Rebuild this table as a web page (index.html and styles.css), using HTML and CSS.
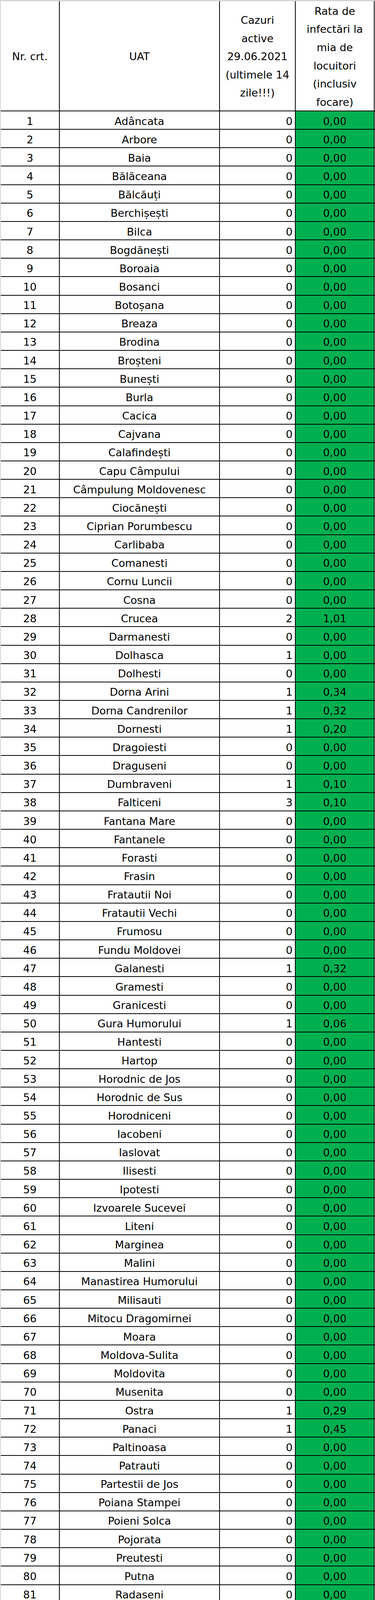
FILE: index.html
```html
<!DOCTYPE html>
<html lang="ro">
<head>
<meta charset="utf-8">
<title>Cazuri active 29.06.2021</title>
<link rel="stylesheet" href="styles.css">
</head>
<body>
<div class="sheet">
  <div class="row head">
    <div class="c c1">Nr. crt.</div>
    <div class="c c2">UAT</div>
    <div class="c c3">Cazuri<br>active<br>29.06.2021<br>(ultimele 14<br>zile!!!)</div>
    <div class="c c4">Rata de<br>infectări la<br>mia de<br>locuitori<br>(inclusiv<br>focare)</div>
  </div>
  <div class="row"><div class="c c1">1</div><div class="c c2">Adâncata</div><div class="c c3">0</div><div class="c c4">0,00</div></div>
  <div class="row"><div class="c c1">2</div><div class="c c2">Arbore</div><div class="c c3">0</div><div class="c c4">0,00</div></div>
  <div class="row"><div class="c c1">3</div><div class="c c2">Baia</div><div class="c c3">0</div><div class="c c4">0,00</div></div>
  <div class="row"><div class="c c1">4</div><div class="c c2">Bălăceana</div><div class="c c3">0</div><div class="c c4">0,00</div></div>
  <div class="row"><div class="c c1">5</div><div class="c c2">Bălcăuți</div><div class="c c3">0</div><div class="c c4">0,00</div></div>
  <div class="row"><div class="c c1">6</div><div class="c c2">Berchișești</div><div class="c c3">0</div><div class="c c4">0,00</div></div>
  <div class="row"><div class="c c1">7</div><div class="c c2">Bilca</div><div class="c c3">0</div><div class="c c4">0,00</div></div>
  <div class="row"><div class="c c1">8</div><div class="c c2">Bogdănești</div><div class="c c3">0</div><div class="c c4">0,00</div></div>
  <div class="row"><div class="c c1">9</div><div class="c c2">Boroaia</div><div class="c c3">0</div><div class="c c4">0,00</div></div>
  <div class="row"><div class="c c1">10</div><div class="c c2">Bosanci</div><div class="c c3">0</div><div class="c c4">0,00</div></div>
  <div class="row"><div class="c c1">11</div><div class="c c2">Botoșana</div><div class="c c3">0</div><div class="c c4">0,00</div></div>
  <div class="row"><div class="c c1">12</div><div class="c c2">Breaza</div><div class="c c3">0</div><div class="c c4">0,00</div></div>
  <div class="row"><div class="c c1">13</div><div class="c c2">Brodina</div><div class="c c3">0</div><div class="c c4">0,00</div></div>
  <div class="row"><div class="c c1">14</div><div class="c c2">Broșteni</div><div class="c c3">0</div><div class="c c4">0,00</div></div>
  <div class="row"><div class="c c1">15</div><div class="c c2">Bunești</div><div class="c c3">0</div><div class="c c4">0,00</div></div>
  <div class="row"><div class="c c1">16</div><div class="c c2">Burla</div><div class="c c3">0</div><div class="c c4">0,00</div></div>
  <div class="row"><div class="c c1">17</div><div class="c c2">Cacica</div><div class="c c3">0</div><div class="c c4">0,00</div></div>
  <div class="row"><div class="c c1">18</div><div class="c c2">Cajvana</div><div class="c c3">0</div><div class="c c4">0,00</div></div>
  <div class="row"><div class="c c1">19</div><div class="c c2">Calafindești</div><div class="c c3">0</div><div class="c c4">0,00</div></div>
  <div class="row"><div class="c c1">20</div><div class="c c2">Capu Câmpului</div><div class="c c3">0</div><div class="c c4">0,00</div></div>
  <div class="row"><div class="c c1">21</div><div class="c c2">Câmpulung Moldovenesc</div><div class="c c3">0</div><div class="c c4">0,00</div></div>
  <div class="row"><div class="c c1">22</div><div class="c c2">Ciocănești</div><div class="c c3">0</div><div class="c c4">0,00</div></div>
  <div class="row"><div class="c c1">23</div><div class="c c2">Ciprian Porumbescu</div><div class="c c3">0</div><div class="c c4">0,00</div></div>
  <div class="row"><div class="c c1">24</div><div class="c c2">Carlibaba</div><div class="c c3">0</div><div class="c c4">0,00</div></div>
  <div class="row"><div class="c c1">25</div><div class="c c2">Comanesti</div><div class="c c3">0</div><div class="c c4">0,00</div></div>
  <div class="row"><div class="c c1">26</div><div class="c c2">Cornu Luncii</div><div class="c c3">0</div><div class="c c4">0,00</div></div>
  <div class="row"><div class="c c1">27</div><div class="c c2">Cosna</div><div class="c c3">0</div><div class="c c4">0,00</div></div>
  <div class="row"><div class="c c1">28</div><div class="c c2">Crucea</div><div class="c c3">2</div><div class="c c4">1,01</div></div>
  <div class="row"><div class="c c1">29</div><div class="c c2">Darmanesti</div><div class="c c3">0</div><div class="c c4">0,00</div></div>
  <div class="row"><div class="c c1">30</div><div class="c c2">Dolhasca</div><div class="c c3">1</div><div class="c c4">0,00</div></div>
  <div class="row"><div class="c c1">31</div><div class="c c2">Dolhesti</div><div class="c c3">0</div><div class="c c4">0,00</div></div>
  <div class="row"><div class="c c1">32</div><div class="c c2">Dorna Arini</div><div class="c c3">1</div><div class="c c4">0,34</div></div>
  <div class="row"><div class="c c1">33</div><div class="c c2">Dorna Candrenilor</div><div class="c c3">1</div><div class="c c4">0,32</div></div>
  <div class="row"><div class="c c1">34</div><div class="c c2">Dornesti</div><div class="c c3">1</div><div class="c c4">0,20</div></div>
  <div class="row"><div class="c c1">35</div><div class="c c2">Dragoiesti</div><div class="c c3">0</div><div class="c c4">0,00</div></div>
  <div class="row"><div class="c c1">36</div><div class="c c2">Draguseni</div><div class="c c3">0</div><div class="c c4">0,00</div></div>
  <div class="row"><div class="c c1">37</div><div class="c c2">Dumbraveni</div><div class="c c3">1</div><div class="c c4">0,10</div></div>
  <div class="row"><div class="c c1">38</div><div class="c c2">Falticeni</div><div class="c c3">3</div><div class="c c4">0,10</div></div>
  <div class="row"><div class="c c1">39</div><div class="c c2">Fantana Mare</div><div class="c c3">0</div><div class="c c4">0,00</div></div>
  <div class="row"><div class="c c1">40</div><div class="c c2">Fantanele</div><div class="c c3">0</div><div class="c c4">0,00</div></div>
  <div class="row"><div class="c c1">41</div><div class="c c2">Forasti</div><div class="c c3">0</div><div class="c c4">0,00</div></div>
  <div class="row"><div class="c c1">42</div><div class="c c2">Frasin</div><div class="c c3">0</div><div class="c c4">0,00</div></div>
  <div class="row"><div class="c c1">43</div><div class="c c2">Fratautii Noi</div><div class="c c3">0</div><div class="c c4">0,00</div></div>
  <div class="row"><div class="c c1">44</div><div class="c c2">Fratautii Vechi</div><div class="c c3">0</div><div class="c c4">0,00</div></div>
  <div class="row"><div class="c c1">45</div><div class="c c2">Frumosu</div><div class="c c3">0</div><div class="c c4">0,00</div></div>
  <div class="row"><div class="c c1">46</div><div class="c c2">Fundu Moldovei</div><div class="c c3">0</div><div class="c c4">0,00</div></div>
  <div class="row"><div class="c c1">47</div><div class="c c2">Galanesti</div><div class="c c3">1</div><div class="c c4">0,32</div></div>
  <div class="row"><div class="c c1">48</div><div class="c c2">Gramesti</div><div class="c c3">0</div><div class="c c4">0,00</div></div>
  <div class="row"><div class="c c1">49</div><div class="c c2">Granicesti</div><div class="c c3">0</div><div class="c c4">0,00</div></div>
  <div class="row"><div class="c c1">50</div><div class="c c2">Gura Humorului</div><div class="c c3">1</div><div class="c c4">0,06</div></div>
  <div class="row"><div class="c c1">51</div><div class="c c2">Hantesti</div><div class="c c3">0</div><div class="c c4">0,00</div></div>
  <div class="row"><div class="c c1">52</div><div class="c c2">Hartop</div><div class="c c3">0</div><div class="c c4">0,00</div></div>
  <div class="row"><div class="c c1">53</div><div class="c c2">Horodnic de Jos</div><div class="c c3">0</div><div class="c c4">0,00</div></div>
  <div class="row"><div class="c c1">54</div><div class="c c2">Horodnic de Sus</div><div class="c c3">0</div><div class="c c4">0,00</div></div>
  <div class="row"><div class="c c1">55</div><div class="c c2">Horodniceni</div><div class="c c3">0</div><div class="c c4">0,00</div></div>
  <div class="row"><div class="c c1">56</div><div class="c c2">Iacobeni</div><div class="c c3">0</div><div class="c c4">0,00</div></div>
  <div class="row"><div class="c c1">57</div><div class="c c2">Iaslovat</div><div class="c c3">0</div><div class="c c4">0,00</div></div>
  <div class="row"><div class="c c1">58</div><div class="c c2">Ilisesti</div><div class="c c3">0</div><div class="c c4">0,00</div></div>
  <div class="row"><div class="c c1">59</div><div class="c c2">Ipotesti</div><div class="c c3">0</div><div class="c c4">0,00</div></div>
  <div class="row"><div class="c c1">60</div><div class="c c2">Izvoarele Sucevei</div><div class="c c3">0</div><div class="c c4">0,00</div></div>
  <div class="row"><div class="c c1">61</div><div class="c c2">Liteni</div><div class="c c3">0</div><div class="c c4">0,00</div></div>
  <div class="row"><div class="c c1">62</div><div class="c c2">Marginea</div><div class="c c3">0</div><div class="c c4">0,00</div></div>
  <div class="row"><div class="c c1">63</div><div class="c c2">Malini</div><div class="c c3">0</div><div class="c c4">0,00</div></div>
  <div class="row"><div class="c c1">64</div><div class="c c2">Manastirea Humorului</div><div class="c c3">0</div><div class="c c4">0,00</div></div>
  <div class="row"><div class="c c1">65</div><div class="c c2">Milisauti</div><div class="c c3">0</div><div class="c c4">0,00</div></div>
  <div class="row"><div class="c c1">66</div><div class="c c2">Mitocu Dragomirnei</div><div class="c c3">0</div><div class="c c4">0,00</div></div>
  <div class="row"><div class="c c1">67</div><div class="c c2">Moara</div><div class="c c3">0</div><div class="c c4">0,00</div></div>
  <div class="row"><div class="c c1">68</div><div class="c c2">Moldova-Sulita</div><div class="c c3">0</div><div class="c c4">0,00</div></div>
  <div class="row"><div class="c c1">69</div><div class="c c2">Moldovita</div><div class="c c3">0</div><div class="c c4">0,00</div></div>
  <div class="row"><div class="c c1">70</div><div class="c c2">Musenita</div><div class="c c3">0</div><div class="c c4">0,00</div></div>
  <div class="row"><div class="c c1">71</div><div class="c c2">Ostra</div><div class="c c3">1</div><div class="c c4">0,29</div></div>
  <div class="row"><div class="c c1">72</div><div class="c c2">Panaci</div><div class="c c3">1</div><div class="c c4">0,45</div></div>
  <div class="row"><div class="c c1">73</div><div class="c c2">Paltinoasa</div><div class="c c3">0</div><div class="c c4">0,00</div></div>
  <div class="row"><div class="c c1">74</div><div class="c c2">Patrauti</div><div class="c c3">0</div><div class="c c4">0,00</div></div>
  <div class="row"><div class="c c1">75</div><div class="c c2">Partestii de Jos</div><div class="c c3">0</div><div class="c c4">0,00</div></div>
  <div class="row"><div class="c c1">76</div><div class="c c2">Poiana Stampei</div><div class="c c3">0</div><div class="c c4">0,00</div></div>
  <div class="row"><div class="c c1">77</div><div class="c c2">Poieni Solca</div><div class="c c3">0</div><div class="c c4">0,00</div></div>
  <div class="row"><div class="c c1">78</div><div class="c c2">Pojorata</div><div class="c c3">0</div><div class="c c4">0,00</div></div>
  <div class="row"><div class="c c1">79</div><div class="c c2">Preutesti</div><div class="c c3">0</div><div class="c c4">0,00</div></div>
  <div class="row"><div class="c c1">80</div><div class="c c2">Putna</div><div class="c c3">0</div><div class="c c4">0,00</div></div>
  <div class="row"><div class="c c1">81</div><div class="c c2">Radaseni</div><div class="c c3">0</div><div class="c c4">0,00</div></div>
  <div class="row"><div class="c c1">82</div><div class="c c2">Radauti</div><div class="c c3">1</div><div class="c c4">0,03</div></div>
  <div class="row"><div class="c c1">83</div><div class="c c2">Rasca</div><div class="c c3">0</div><div class="c c4">0,00</div></div>
  <div class="row"><div class="c c1">84</div><div class="c c2">Sadova</div><div class="c c3">0</div><div class="c c4">0,00</div></div>
  <div class="row"><div class="c c1">85</div><div class="c c2">Salcea</div><div class="c c3">0</div><div class="c c4">0,00</div></div>
  <div class="row"><div class="c c1">86</div><div class="c c2">Satu Mare</div><div class="c c3">1</div><div class="c c4">0,21</div></div>
  <div class="row"><div class="c c1">87</div><div class="c c2">Siminicea</div><div class="c c3">1</div><div class="c c4">0,34</div></div>
  <div class="row"><div class="c c1">88</div><div class="c c2">Siret</div><div class="c c3">0</div><div class="c c4">0,00</div></div>
  <div class="row"><div class="c c1">89</div><div class="c c2">Slatina</div><div class="c c3">0</div><div class="c c4">0,00</div></div>
  <div class="row"><div class="c c1">90</div><div class="c c2">Solca</div><div class="c c3">0</div><div class="c c4">0,00</div></div>
  <div class="row"><div class="c c1">91</div><div class="c c2">Straja</div><div class="c c3">0</div><div class="c c4">0,00</div></div>
  <div class="row"><div class="c c1">92</div><div class="c c2">Stroiesti</div><div class="c c3">0</div><div class="c c4">0,00</div></div>
  <div class="row"><div class="c c1">93</div><div class="c c2">Stulpicani</div><div class="c c3">0</div><div class="c c4">0,00</div></div>
  <div class="row"><div class="c c1">94</div><div class="c c2">Suceava</div><div class="c c3">0</div><div class="c c4">0,00</div></div>
  <div class="row"><div class="c c1">95</div><div class="c c2">Sucevita</div><div class="c c3">0</div><div class="c c4">0,00</div></div>
  <div class="row"><div class="c c1">96</div><div class="c c2">Șaru Dornei</div><div class="c c3">1</div><div class="c c4">0,24</div></div>
  <div class="row"><div class="c c1">97</div><div class="c c2">Șcheia</div><div class="c c3">0</div><div class="c c4">0,00</div></div>
  <div class="row"><div class="c c1">98</div><div class="c c2">Șerbauti</div><div class="c c3">0</div><div class="c c4">0,00</div></div>
  <div class="row"><div class="c c1">99</div><div class="c c2">Todiresti</div><div class="c c3">0</div><div class="c c4">0,00</div></div>
  <div class="row"><div class="c c1">100</div><div class="c c2">Udesti</div><div class="c c3">0</div><div class="c c4">0,00</div></div>
  <div class="row"><div class="c c1">101</div><div class="c c2">Ulma</div><div class="c c3">0</div><div class="c c4">0,00</div></div>
  <div class="row"><div class="c c1">102</div><div class="c c2">Vadu Moldovei</div><div class="c c3">0</div><div class="c c4">0,00</div></div>
  <div class="row"><div class="c c1">103</div><div class="c c2">Valea Moldovei</div><div class="c c3">0</div><div class="c c4">0,00</div></div>
  <div class="row"><div class="c c1">104</div><div class="c c2">Vama</div><div class="c c3">0</div><div class="c c4">0,00</div></div>
  <div class="row"><div class="c c1">105</div><div class="c c2">Vatra Dornei</div><div class="c c3">0</div><div class="c c4">0,00</div></div>
  <div class="row"><div class="c c1">106</div><div class="c c2">Vatra Moldovitei</div><div class="c c3">0</div><div class="c c4">0,00</div></div>
  <div class="row"><div class="c c1">107</div><div class="c c2">Veresti</div><div class="c c3">1</div><div class="c c4">0,13</div></div>
  <div class="row"><div class="c c1">108</div><div class="c c2">Vicovu de Jos</div><div class="c c3">0</div><div class="c c4">0,00</div></div>
  <div class="row"><div class="c c1">109</div><div class="c c2">Vicovu de Sus</div><div class="c c3">0</div><div class="c c4">0,00</div></div>
  <div class="row"><div class="c c1">110</div><div class="c c2">Voitinel</div><div class="c c3">0</div><div class="c c4">0,00</div></div>
  <div class="row"><div class="c c1">111</div><div class="c c2">Volovat</div><div class="c c3">0</div><div class="c c4">0,00</div></div>
  <div class="row"><div class="c c1">112</div><div class="c c2">Vulturesti</div><div class="c c3">2</div><div class="c c4">0,56</div></div>
  <div class="row"><div class="c c1">113</div><div class="c c2">Zamostea</div><div class="c c3">0</div><div class="c c4">0,00</div></div>
  <div class="row"><div class="c c1">114</div><div class="c c2">Zvoristea</div><div class="c c3">0</div><div class="c c4">0,00</div></div>
  <div class="row blank">
    <div class="c c1"></div><div class="c c2"></div><div class="c c3"></div><div class="c c4"></div>
  </div>
  <div class="row total">
    <div class="c c1"></div><div class="c c2"></div><div class="c c3">21</div><div class="c c4">0,03</div>
  </div>
</div>
</body>
</html>
```
FILE: styles.css
```css
html, body {
  margin: 0;
  padding: 0;
  background: #ffffff;
}

body {
  font-family: "DejaVu Sans", "Noto Sans", sans-serif;
  font-size: 27px;
  color: #000000;
}

.sheet {
  width: 959px;
  border-top: 3px solid #d4d4d4;
  border-left: 2px solid #d4d4d4;
}

.row {
  display: grid;
  grid-template-columns: 151px 410px 194px 202px;
  height: 47.16px;
  box-sizing: border-box;
  border-bottom: 2px solid #000000;
}

.c {
  display: flex;
  align-items: center;
  justify-content: center;
  box-sizing: border-box;
  border-right: 2px solid #000000;
  padding-top: 5px;
  white-space: nowrap;
  overflow: hidden;
  line-height: 1;
}

.c3 {
  justify-content: flex-end;
  padding-right: 6px;
}

.c4 {
  background: #00b050;
}

.head {
  height: 282px;
}

.head .c {
  padding-top: 5px;
  text-align: center;
  line-height: 46.6px;
}

.head .c3 {
  justify-content: center;
  padding-right: 0;
}

.head .c4 {
  background: #ffffff;
}

.blank {
  height: 47px;
  border-bottom: none;
}

.blank .c1 {
  border-right-color: #d4d4d4;
  border-bottom: 2px solid #d4d4d4;
}

.blank .c2 {
  border-bottom: 2px solid #d4d4d4;
}

.blank .c4 {
  background: #ffffff;
}

.total {
  height: 50px;
  border-bottom: none;
}

.total .c1 {
  border-right-color: #d4d4d4;
  border-bottom: 2px solid #d4d4d4;
}

.total .c2 {
  border-right-width: 3px;
  border-bottom: 2px solid #d4d4d4;
}

.total .c3 {
  justify-content: center;
  padding-right: 0;
  padding-top: 2px;
  background: #ffc000;
  border-top: 3px solid #000000;
  border-bottom: 3px solid #000000;
  border-right-width: 3px;
}

.total .c4 {
  padding-top: 2px;
  background: #f8cbad;
  border-top: 3px solid #000000;
  border-bottom: 3px solid #000000;
  border-right-width: 3px;
}
```
